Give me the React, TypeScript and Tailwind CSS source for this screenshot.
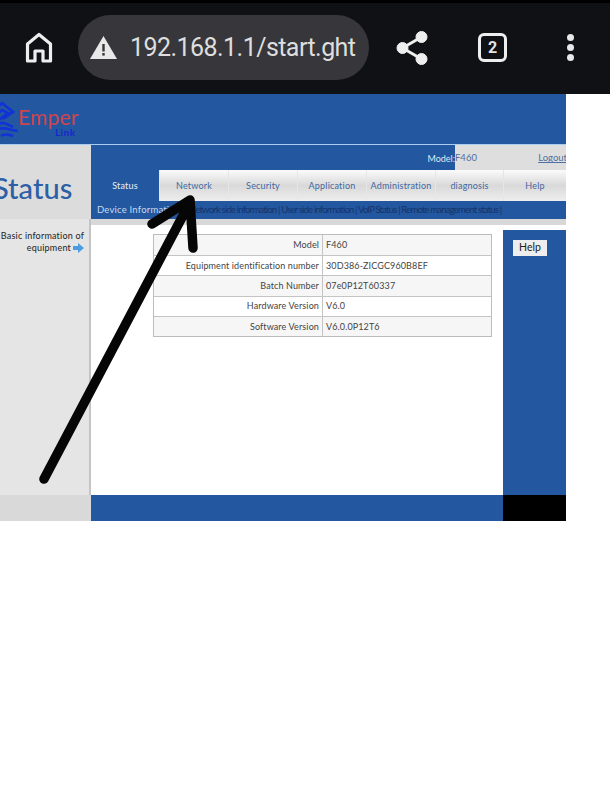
import React from "react";

const TABS = ["Network", "Security", "Application", "Administration", "diagnosis", "Help"];

const ROWS = [
  ["Model", "F460"],
  ["Equipment identification number", "30D386-ZICGC960B8EF"],
  ["Batch Number", "07e0P12T60337"],
  ["Hardware Version", "V6.0"],
  ["Software Version", "V6.0.0P12T6"],
];

const BrowserBar = () => (
  <div className="h-[94px] bg-[#101115] border-t-[3px] border-black flex items-center pb-[2px] text-[#e4e4e6]">
    <div className="w-[78px] flex justify-center shrink-0">
      <svg width="28" height="31" viewBox="0 0 28 31" fill="none" stroke="#eeeeee" strokeWidth="3.2">
        <path d="M2.5 29V12L14 2.5L25.5 12V29H18V19H10V29Z" strokeLinejoin="round" />
      </svg>
    </div>
    <div className="w-[291px] h-[65px] rounded-full bg-[#37373b] flex items-center pl-[12px] shrink-0">
      <svg width="27" height="23" viewBox="0 0 27 23" className="shrink-0">
        <path d="M13.5 0L27 23H0Z" fill="#e8e8e8" />
        <rect x="12.3" y="8" width="2.4" height="7.5" fill="#37373b" />
        <rect x="12.3" y="17" width="2.4" height="2.6" fill="#37373b" />
      </svg>
      <span className="ml-[13px] text-[25px] tracking-[-0.55px] whitespace-nowrap font-['Roboto',sans-serif] text-[#dededf]">
        192.168.1.1/start.ght
      </span>
    </div>
    <div className="ml-[27px] w-[32px] flex justify-center shrink-0">
      <svg width="32" height="34" viewBox="0 0 32 34" fill="#eeeeee" stroke="#eeeeee">
        <circle cx="6.5" cy="17" r="5.5" />
        <circle cx="25.5" cy="6" r="5.5" />
        <circle cx="25.5" cy="28" r="5.5" />
        <path d="M25.5 6L6.5 17L25.5 28" fill="none" strokeWidth="3" />
      </svg>
    </div>
    <div className="ml-[50px] w-[29px] h-[29px] rounded-[6px] border-[3px] border-[#eeeeee] flex items-center justify-center text-[16px] font-bold font-['Roboto',sans-serif] shrink-0">
      2
    </div>
    <div className="ml-[60px] flex flex-col gap-[3px] shrink-0">
      <span className="w-[7px] h-[7px] rounded-full bg-[#e8e8e8]" />
      <span className="w-[7px] h-[7px] rounded-full bg-[#e8e8e8]" />
      <span className="w-[7px] h-[7px] rounded-full bg-[#e8e8e8]" />
    </div>
  </div>
);

const Logo = () => (
  <div className="flex h-[50px] pt-[6px]">
    <svg width="18" height="38" viewBox="0 0 18 38" fill="none" stroke="#1232d8" strokeWidth="2.6" className="shrink-0">
      <path d="M-3 8L2 3L13 12L3 19" />
      <path d="M-3 14L2 10L8 13L-1 20" />
      <path d="M-3 25C3 20 8 25 13 27" />
      <path d="M-3 30C3 26 9 30 18 31" />
      <path d="M1 36C6 33 10 35 13 36" />
    </svg>
    <div className="flex flex-col font-['Lato',sans-serif] leading-none">
      <span className="text-[21px] mt-[6px] tracking-[0.2px] h-[21px] text-[#cc4650]">Emper</span>
      <span className="text-[10px] self-end mr-[3px] font-bold tracking-[0.5px] text-[#1428cc]">Link</span>
    </div>
  </div>
);

export default function App() {
  return (
    <div className="relative w-[610px] h-[791px] bg-white overflow-hidden font-['Lato',sans-serif]">
      <BrowserBar />

      <div className="w-[566px] overflow-hidden">
        <div className="bg-[#23579f]">
          <Logo />
        </div>
        <div className="h-px bg-[#a9cdf0]" />

        <div className="flex h-[74px]">
          <div className="w-[91px] bg-[#dcdcdc] flex items-center pt-[11px] overflow-hidden">
            <span className="-ml-[7px] text-[29px] leading-none font-medium text-[#2d5fa6] font-['Lato',sans-serif]">
              Status
            </span>
          </div>
          <div className="flex-1 flex flex-col">
            <div className="h-[25px] flex">
              <div className="w-[364px] bg-[#23579f] flex items-center justify-end text-[9px] pt-[2px] text-[#dfe9f5]">
                Model:
              </div>
              <div className="flex-1 bg-[#dedede] flex items-center justify-between text-[9.5px] pt-[2px] text-[#4f6f9f] whitespace-nowrap">
                <span>F460</span>
                <span className="underline -mr-[1px]">Logout</span>
              </div>
            </div>
            <div className="h-[31px] flex text-[9px] tracking-[0.2px]">
              <div className="w-[68px] bg-[#23579f] text-[#e8eef7] flex items-center justify-center">Status</div>
              {TABS.map((tab, i) => (
                <div
                  key={tab}
                  className={`${i === 5 ? "w-[63px]" : i === 4 ? "w-[68px]" : "w-[69px]"} bg-gradient-to-b from-[#fbfbfb] via-[#d9d9d9] to-[#eeeeee] border-l border-[#e6e6e6] text-[#42689f] flex items-center justify-center`}
                >
                  {tab}
                </div>
              ))}
            </div>
            <div className="h-[18px] bg-[#23579f] pl-[6px] flex items-center text-[9.5px] whitespace-nowrap text-[#c9d9ee]">
              <span className="tracking-[0.2px] w-[92px] shrink-0 overflow-hidden">Device Information</span>
              <span className="tracking-[-0.8px] text-[#14336a]">
                Network side information | User side information | VoIP Status | Remote management status |
              </span>
            </div>
          </div>
        </div>

        <div className="flex h-[276px]">
          <div className="w-[91px] bg-[#e5e5e5] border-r-2 border-[#c4c4c4] pt-[11px] pr-[5px] text-right text-[9px] leading-[12px] tracking-[0.2px] text-[#222222]">
            <div className="whitespace-nowrap">Basic information of</div>
            <div className="flex justify-end items-center gap-[2px]">
              equipment
              <svg width="11" height="10" viewBox="0 0 11 10">
                <path d="M0 3H5V0L11 5L5 10V7H0Z" fill="#4d9ce0" />
              </svg>
            </div>
          </div>
          <div className="flex-1 flex flex-col">
            <div className="h-[6px] bg-[#d8d8d8]" />
            <div className="flex flex-1">
              <div className="flex-1 pt-[9px] pl-[62px] bg-white">
                <div className="w-[339px] border border-[#bcbcbc] text-[9px] tracking-[0.12px] text-[#444444]">
                  {ROWS.map(([label, value], i) => (
                    <div
                      key={label}
                      className={`flex h-[20.2px] items-center ${i > 0 ? "border-t border-[#c4c4c4]" : ""} ${i % 2 === 0 ? "bg-[#f6f6f6]" : "bg-white"}`}
                    >
                      <div className="w-[169px] h-full border-r border-[#c4c4c4] pr-[3px] flex items-center justify-end whitespace-nowrap">
                        {label}
                      </div>
                      <div className="pl-[3px] whitespace-nowrap">{value}</div>
                    </div>
                  ))}
                </div>
              </div>
              <div className="w-[63px] bg-[#23579f] mt-[5px] pt-[10px] pl-[10px] self-stretch">
                <div className="w-[34px] h-[16px] bg-[#eeeeee] flex items-center justify-center text-[10.5px] text-[#222222]">
                  Help
                </div>
              </div>
            </div>
          </div>
        </div>

        <div className="flex h-[26px]">
          <div className="w-[91px] bg-[#d9d9d9]" />
          <div className="flex-1 bg-[#23579f]" />
          <div className="w-[63px] bg-black" />
        </div>
      </div>

      {/* arrow drawn over the page */}
      <svg className="absolute left-0 top-0" width="610" height="521" viewBox="0 0 610 521" fill="none">
        <path
          d="M44 479L188 206M152 224L190 200L193 248"
          stroke="#060606"
          strokeWidth="9.5"
          strokeLinecap="round"
          strokeLinejoin="round"
        />
      </svg>
    </div>
  );
}
